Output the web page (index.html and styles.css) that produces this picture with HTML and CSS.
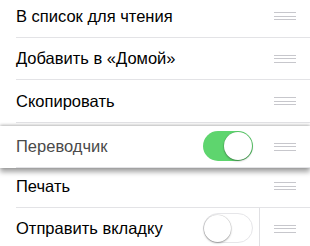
FILE: index.html
```html
<!DOCTYPE html>
<html lang="ru">
<head>
<meta charset="utf-8">
<link rel="stylesheet" href="styles.css">
</head>
<body>
<div class="list">
  <div class="row">
    <div class="cell"><span class="label">В список для чтения</span><span class="spacer"></span><div class="reorder"><span class="grip"><i></i><i></i><i></i></span></div></div>
  </div>
  <div class="row">
    <div class="cell"><span class="label">Добавить в «Домой»</span><span class="spacer"></span><div class="reorder"><span class="grip"><i></i><i></i><i></i></span></div></div>
  </div>
  <div class="row">
    <div class="cell"><span class="label">Скопировать</span><span class="spacer"></span><div class="reorder"><span class="grip"><i></i><i></i><i></i></span></div></div>
  </div>
  <div class="row dragging">
    <div class="cell"><span class="label">Переводчик</span><span class="spacer"></span><span class="toggle on"><span class="knob"></span></span><div class="reorder"><span class="grip"><i></i><i></i><i></i></span></div></div>
  </div>
  <div class="row">
    <div class="cell"><span class="label">Печать</span><span class="spacer"></span><div class="reorder"><span class="grip"><i></i><i></i><i></i></span></div></div>
  </div>
  <div class="row">
    <div class="cell"><span class="label">Отправить вкладку</span><span class="spacer"></span><span class="toggle off"><span class="knob"></span></span><div class="reorder divided"><span class="grip"><i></i><i></i><i></i></span></div></div>
  </div>
</div>
</body>
</html>
```
FILE: styles.css
```css
html, body {
  margin: 0;
  padding: 0;
  background: #ffffff;
  overflow: hidden;
}
body {
  width: 310px;
  height: 246px;
  font-family: "Liberation Sans", Arial, sans-serif;
}
.list {
  margin-top: -5px;
  display: flex;
  flex-direction: column;
}
.row {
  height: 42.5px;
  padding-left: 16px;
  display: flex;
  background: #ffffff;
  position: relative;
}
.cell {
  flex: 1;
  display: flex;
  align-items: center;
  border-bottom: 1px solid #e3e3e6;
}
.label {
  font-size: 16.5px;
  color: #000000;
  padding-top: 1px;
}
.spacer {
  flex: 1;
}
.reorder {
  width: 51px;
  align-self: stretch;
  display: flex;
  align-items: center;
  justify-content: center;
  margin-left: 6px;
}
.reorder.divided {
  border-left: 1px solid #e0e0e3;
  width: 50px;
}
.grip {
  width: 22px;
  display: flex;
  flex-direction: column;
  gap: 2.5px;
  padding-top: 1px;
}
.grip i {
  display: block;
  height: 1px;
  background: #c7c7cc;
}
.dragging {
  z-index: 2;
  transform: translateY(3px);
  box-shadow: 0 -1px 3px rgba(0, 0, 0, 0.28), 0 4px 5px rgba(0, 0, 0, 0.36);
}
.dragging .label {
  color: #4a4a4a;
}
.toggle {
  width: 50px;
  height: 30px;
  border-radius: 15px;
  box-sizing: border-box;
  display: flex;
  align-items: center;
  padding: 1px;
}
.toggle.on {
  background: #5ed56e;
  justify-content: flex-end;
}
.toggle.off {
  background: #ffffff;
  border: 1.5px solid #e6e6e9;
  justify-content: flex-start;
  padding: 0;
}
.knob {
  width: 28px;
  height: 28px;
  border-radius: 50%;
  background: #ffffff;
  box-shadow: 0 1px 2px rgba(0, 0, 0, 0.35), 0 0 0 0.5px rgba(0, 0, 0, 0.12);
}
.toggle.off .knob {
  width: 27px;
  height: 27px;
}
```
